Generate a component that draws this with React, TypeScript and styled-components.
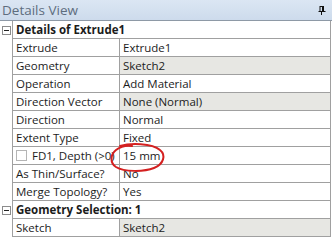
import React from "react";
import styled, { createGlobalStyle } from "styled-components";

const Global = createGlobalStyle`
  html, body { margin: 0; padding: 0; background: #ffffff; }
  body { font-family: "Open Sans", "Noto Sans", sans-serif; }
`;

const Panel = styled.div`
  width: 332px;
  height: 240px;
  background: #ffffff;
  position: relative;
  overflow: hidden;
`;

const TitleBar = styled.div`
  height: 21px;
  box-sizing: border-box;
  background: linear-gradient(#dbe6f3, #cddbec);
  border-bottom: 1px solid #8e99a6;
  display: flex;
  align-items: center;
  justify-content: space-between;
  padding: 0 6px 0 2px;
  font-size: 13.5px;
  color: #5e6d7e;
`;

const Table = styled.div`
  width: 331px;
  box-sizing: border-box;
  border-right: 1px solid #a0a0a0;
  display: grid;
  grid-template-columns: 13px 107px 1fr;
  grid-auto-rows: 18px;
  font-size: 11.5px;
  color: #1c1c1c;
`;

const Gutter = styled.div`
  border-right: 1px solid #a0a0a0;
  display: flex;
  align-items: center;
  justify-content: flex-start;
  padding-left: 2px;
`;

const Cell = styled.div<{ $shade?: boolean; $span?: boolean; $bold?: boolean; $divide?: boolean }>`
  grid-column: ${(p) => (p.$span ? "2 / 4" : "auto")};
  border-bottom: 1px solid #a0a0a0;
  border-right: ${(p) => (p.$divide ? "1px solid #a0a0a0" : "none")};
  background: ${(p) => (p.$shade ? "#e7e7e3" : "#ffffff")};
  font-weight: ${(p) => (p.$bold ? 700 : 400)};
  display: flex;
  align-items: center;
  padding-left: 3px;
  white-space: nowrap;
  overflow: hidden;
`;

const Toggle = styled.div`
  width: 9px;
  height: 9px;
  box-sizing: border-box;
  border: 1px solid #8c8c8c;
  background: #ffffff;
  position: relative;
  &::after {
    content: "";
    position: absolute;
    left: 1px;
    right: 1px;
    top: 3px;
    height: 1px;
    background: #222;
  }
`;

const Check = styled.span`
  display: inline-block;
  width: 11px;
  height: 11px;
  box-sizing: border-box;
  border: 1px solid #b5b5b5;
  background: #ffffff;
  margin-right: 5px;
  flex: none;
`;

const Circle = styled.svg`
  position: absolute;
  left: 108px;
  top: 142px;
  pointer-events: none;
`;

const Pin = () => (
  <svg width="8" height="9" viewBox="0 0 8 9">
    <rect x="2" y="0.5" width="3.5" height="5" fill="none" stroke="#111" strokeWidth="1" />
    <rect x="4" y="0.5" width="1.5" height="5" fill="#111" />
    <rect x="0.5" y="5" width="7" height="1" fill="#111" />
    <rect x="3" y="6" width="1" height="3" fill="#111" />
  </svg>
);

type Row =
  | { kind: "header"; label: string }
  | { kind: "prop"; name: string; value: string; shade?: boolean; check?: boolean };

const rows: Row[] = [
  { kind: "header", label: "Details of Extrude1" },
  { kind: "prop", name: "Extrude", value: "Extrude1" },
  { kind: "prop", name: "Geometry", value: "Sketch2", shade: true },
  { kind: "prop", name: "Operation", value: "Add Material" },
  { kind: "prop", name: "Direction Vector", value: "None (Normal)", shade: true },
  { kind: "prop", name: "Direction", value: "Normal" },
  { kind: "prop", name: "Extent Type", value: "Fixed" },
  { kind: "prop", name: "FD1,  Depth (>0)", value: "15 mm", check: true },
  { kind: "prop", name: "As Thin/Surface?", value: "No" },
  { kind: "prop", name: "Merge Topology?", value: "Yes" },
  { kind: "header", label: "Geometry Selection: 1" },
  { kind: "prop", name: "Sketch", value: "Sketch2", shade: true },
];

export default function App() {
  return (
    <Panel>
      <Global />
      <TitleBar>
        <span>Details View</span>
        <Pin />
      </TitleBar>
      <Table>
        {rows.map((r, i) =>
          r.kind === "header" ? (
            <React.Fragment key={i}>
              <Gutter>
                <Toggle />
              </Gutter>
              <Cell $span $bold>
                {r.label}
              </Cell>
            </React.Fragment>
          ) : (
            <React.Fragment key={i}>
              <Gutter />
              <Cell $divide>
                {r.check && <Check />}
                {r.name}
              </Cell>
              <Cell $shade={r.shade}>{r.value}</Cell>
            </React.Fragment>
          )
        )}
      </Table>
      <Circle width="60" height="32" viewBox="0 0 60 32">
        <path
          d="M12 4 C 22 1, 44 1, 52 8 C 58 13, 56 22, 46 26 C 36 30, 16 30, 8 25 C 2 21, 2 13, 8 8 C 12 5, 18 3, 24 4"
          fill="none"
          stroke="#d42020"
          strokeWidth="2"
          strokeLinecap="round"
        />
      </Circle>
    </Panel>
  );
}
